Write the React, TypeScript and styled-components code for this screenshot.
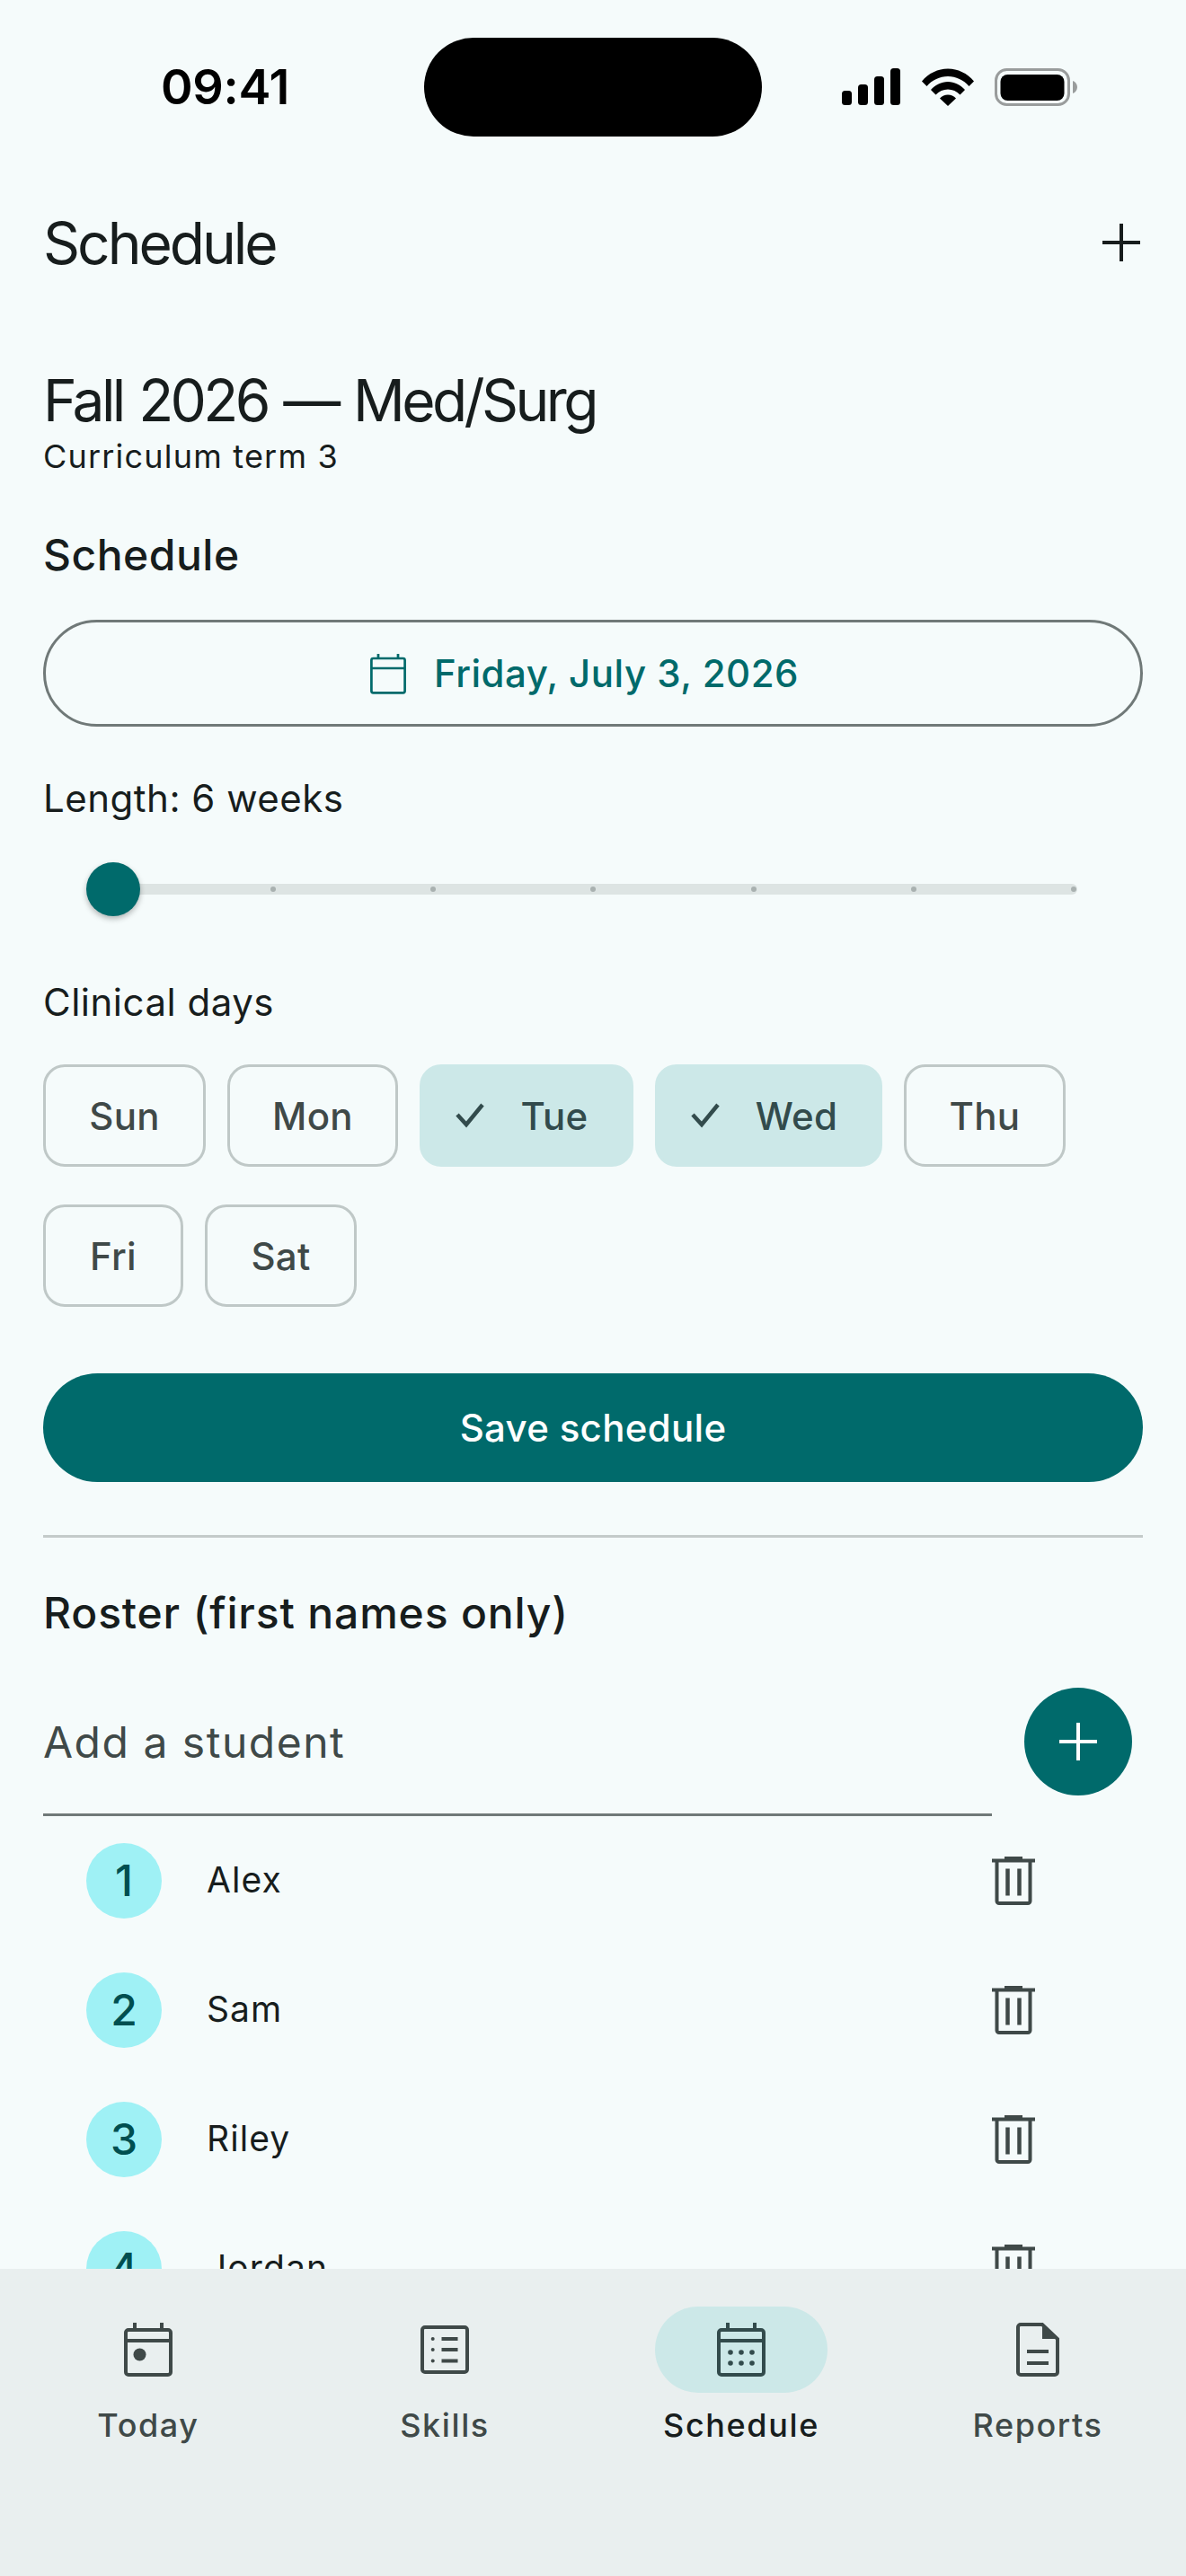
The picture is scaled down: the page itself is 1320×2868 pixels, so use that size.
import React from 'react';
import styled, { createGlobalStyle } from 'styled-components';

const GlobalStyle = createGlobalStyle`
  html, body {
    margin: 0;
    padding: 0;
    background: #f5fbfb;
  }
  * {
    box-sizing: border-box;
  }
`;

const DAYS = [
  { name: 'Sun', width: 181, selected: false },
  { name: 'Mon', width: 190, selected: false },
  { name: 'Tue', width: 238, selected: true },
  { name: 'Wed', width: 253, selected: true },
  { name: 'Thu', width: 180, selected: false },
  { name: 'Fri', width: 156, selected: false },
  { name: 'Sat', width: 169, selected: false },
];

const STUDENTS = ['Alex', 'Sam', 'Riley', 'Jordan'];

const SignalIcon = () => (
  <svg width="66" height="42" viewBox="0 0 66 42" fill="#000">
    <rect x="0" y="25" width="11" height="16" rx="3.5" />
    <rect x="18" y="18" width="11" height="23" rx="3.5" />
    <rect x="36" y="9" width="11" height="32" rx="3.5" />
    <rect x="54" y="0" width="11" height="41" rx="3.5" />
  </svg>
);

const WifiIcon = () => (
  <svg width="58" height="42" viewBox="0 0 58 42" fill="#000">
    <path d="M0 14.5C7.5 5.500 18 0.500 29 0.500S50.500 5.500 58 14.500L52.500 20C46.500 13 38 9 29 9S11.500 13 5.500 20Z" />
    <path d="M10 24C15 18.500 21.800 15 29 15S43 18.500 48 24L42.500 29.500C39 25.500 34 23.500 29 23.500S19 25.500 15.500 29.500Z" />
    <path d="M20 33.500C22.500 31 25.500 29.500 29 29.500S35.500 31 38 33.500L29 42Z" />
  </svg>
);

const BatteryIcon = () => (
  <svg width="92" height="42" viewBox="0 0 92 42">
    <rect x="1.500" y="1.500" width="81" height="39" rx="12" fill="none" stroke="#999c9c" strokeWidth="3" />
    <rect x="6.500" y="7" width="71" height="29" rx="8" fill="#000" />
    <path d="M87 14C90 15 92 18 92 21S90 27 87 28Z" fill="#999c9c" />
  </svg>
);

const PlusIcon = ({ color }: { color: string }) => (
  <svg width="42" height="42" viewBox="0 0 42 42" fill={color}>
    <rect x="19" y="0" width="4" height="42" />
    <rect x="0" y="19" width="42" height="4" />
  </svg>
);

const DateIcon = () => (
  <svg width="42" height="46" viewBox="0 0 42 46" fill="none" stroke="#006a6b" strokeWidth="2.700">
    <rect x="2.400" y="6" width="37.200" height="38.300" rx="2" />
    <path d="M2.400 17H39.600M10 1V6M32 1V6" />
  </svg>
);

const CheckIcon = () => (
  <svg width="36" height="28" viewBox="0 0 36 28" fill="none" stroke="#324b4c" strokeWidth="4.500">
    <path d="M2 13L12 24L30 2" />
  </svg>
);

const TrashIcon = () => (
  <svg width="48" height="54" viewBox="0 0 48 54" fill="none" stroke="#3f4948" strokeWidth="4">
    <path d="M0 4.500H48" />
    <path d="M14 1.500H34" strokeWidth="3" />
    <path d="M5.500 4.500V49.500A2.500 2.500 0 0 0 8 52H40A2.500 2.500 0 0 0 42.500 49.500V4.500" />
    <path d="M17.500 13.500V43.500M30.500 13.500V43.500" strokeWidth="4.500" />
  </svg>
);

const CalendarFrame = () => (
  <>
    <rect x="11" y="14" width="50" height="50" rx="3" />
    <path d="M11 26H61M21 6V14M51 6V14" />
  </>
);

const TodayIcon = () => (
  <svg width="72" height="72" viewBox="0 0 72 72" fill="none" stroke="#3f4948" strokeWidth="4">
    <CalendarFrame />
    <circle cx="26.500" cy="41.500" r="7" fill="#3f4948" stroke="none" />
  </svg>
);

const SkillsIcon = () => (
  <svg width="72" height="72" viewBox="0 0 72 72" fill="none" stroke="#3f4948" strokeWidth="4">
    <rect x="11" y="11" width="50" height="50" rx="3" />
    <path d="M32.500 24H50.500M32.500 36H50.500M32.500 48.500H50.500" />
    <g fill="#3f4948" stroke="none">
      <circle cx="22.700" cy="24" r="2" />
      <circle cx="22.700" cy="36" r="2" />
      <circle cx="22.700" cy="48.500" r="2" />
    </g>
  </svg>
);

const ScheduleIcon = () => (
  <svg width="72" height="72" viewBox="0 0 72 72" fill="none" stroke="#324b4c" strokeWidth="4">
    <CalendarFrame />
    <g fill="#324b4c" stroke="none">
      {[24, 36, 48].map((x) =>
        [39, 51].map((y) => <circle key={`${x}-${y}`} cx={x} cy={y} r="2.800" />),
      )}
    </g>
  </svg>
);

const ReportsIcon = () => (
  <svg width="72" height="72" viewBox="0 0 72 72" fill="none" stroke="#3f4948" strokeWidth="4">
    <path d="M17 8H41L58 24V61A3 3 0 0 1 55 64H17A3 3 0 0 1 14 61V11A3 3 0 0 1 17 8Z" />
    <path d="M41 7L59 24H41Z" fill="#3f4948" stroke="none" />
    <path d="M24 38H48M24 51H48" />
  </svg>
);

const NAV_ITEMS = [
  { label: 'Today', icon: <TodayIcon />, active: false },
  { label: 'Skills', icon: <SkillsIcon />, active: false },
  { label: 'Schedule', icon: <ScheduleIcon />, active: true },
  { label: 'Reports', icon: <ReportsIcon />, active: false },
];

const App = () => {
  return (
    <Screen>
      <GlobalStyle />
      <StatusBar>
        <Clock>09:41</Clock>
        <Island />
        <StatusIcons>
          <SignalIcon />
          <WifiIcon />
          <BatteryIcon />
        </StatusIcons>
      </StatusBar>

      <AppBar>
        <AppBarTitle>Schedule</AppBarTitle>
        <PlusIcon color="#171d1d" />
      </AppBar>

      <Content>
        <TermTitle>Fall 2026 — Med/Surg</TermTitle>
        <TermSubtitle>Curriculum term 3</TermSubtitle>

        <SectionTitle>Schedule</SectionTitle>
        <DateButton>
          <DateIcon />
          <span>Friday, July 3, 2026</span>
        </DateButton>

        <LengthLabel>Length: 6 weeks</LengthLabel>
        <Slider>
          <SliderTrack>
            {Array.from({ length: 7 }).map((_, i) => (
              <SliderTick key={i} />
            ))}
          </SliderTrack>
          <SliderThumb />
        </Slider>

        <DaysLabel>Clinical days</DaysLabel>
        <Chips>
          {DAYS.map((day) => (
            <Chip key={day.name} $selected={day.selected} $width={day.width}>
              {day.selected && <CheckIcon />}
              {day.name}
            </Chip>
          ))}
        </Chips>

        <SaveButton>Save schedule</SaveButton>
        <Divider />

        <RosterTitle>Roster (first names only)</RosterTitle>
        <AddRow>
          <AddField>Add a student</AddField>
          <AddFab>
            <PlusIcon color="#ffffff" />
          </AddFab>
        </AddRow>

        <RosterList>
          {STUDENTS.map((name, i) => (
            <RosterRow key={name}>
              <Avatar>{i + 1}</Avatar>
              <StudentName>{name}</StudentName>
              <TrashIcon />
            </RosterRow>
          ))}
        </RosterList>
      </Content>

      <BottomNav>
        {NAV_ITEMS.map((item) => (
          <NavItem key={item.label}>
            <NavPill $active={item.active}>{item.icon}</NavPill>
            <NavLabel $active={item.active}>{item.label}</NavLabel>
          </NavItem>
        ))}
      </BottomNav>
    </Screen>
  );
};

const Screen = styled.div`
  width: 1320px;
  height: 2868px;
  display: flex;
  flex-direction: column;
  overflow: hidden;
  background: #f5fbfb;
  color: #171d1d;
  font-family: Inter, 'Noto Sans', sans-serif;
`;

const StatusBar = styled.div`
  flex: none;
  height: 210px;
  padding: 42px 0 0 179px;
  display: flex;
  align-items: flex-start;
`;

const Clock = styled.div`
  width: 143px;
  height: 110px;
  line-height: 110px;
  font-size: 54px;
  font-weight: 600;
  letter-spacing: -0.3px;
  color: #000;
  white-space: nowrap;
`;

const Island = styled.div`
  width: 376px;
  height: 110px;
  margin-left: 150px;
  border-radius: 55px;
  background: #000;
`;

const StatusIcons = styled.div`
  height: 42px;
  margin: 34px 0 0 89px;
  display: flex;
  gap: 23px;
`;

const AppBar = styled.div`
  flex: none;
  height: 120px;
  padding: 0 51px 0 48px;
  display: flex;
  align-items: center;
  justify-content: space-between;
`;

const AppBarTitle = styled.h1`
  margin: 0;
  font-size: 64px;
  font-weight: 400;
  letter-spacing: -3px;
`;

const Content = styled.main`
  flex: 1;
  min-height: 0;
  overflow: hidden;
  padding: 78px 48px 0;
`;

const TermTitle = styled.h2`
  margin: 0;
  font-size: 64px;
  line-height: 76px;
  font-weight: 400;
  letter-spacing: -3.6px;
  word-spacing: 3px;
`;

const TermSubtitle = styled.div`
  font-size: 36px;
  line-height: 48px;
  letter-spacing: 1.2px;
`;

const SectionTitle = styled.h3`
  margin: 56px 0 0;
  font-size: 48px;
  line-height: 60px;
  font-weight: 450;
  letter-spacing: 0.5px;
`;

const DateButton = styled.div`
  height: 119px;
  margin-top: 42px;
  padding-right: 20px;
  border: 3px solid #707978;
  border-radius: 60px;
  display: flex;
  align-items: center;
  justify-content: center;
  gap: 30px;
  color: #006a6b;
  font-size: 42px;
  font-weight: 450;
  letter-spacing: 0.5px;
`;

const LengthLabel = styled.div`
  margin-top: 53px;
  font-size: 42px;
  line-height: 54px;
  letter-spacing: 0.5px;
`;

const Slider = styled.div`
  position: relative;
  width: 1104px;
  height: 60px;
  margin: 44px 0 0 48px;
  display: flex;
  align-items: center;
`;

const SliderTrack = styled.div`
  width: 1076px;
  height: 12px;
  margin-left: 27px;
  padding-right: 1px;
  border-radius: 6px;
  background: #dde4e3;
  display: flex;
  align-items: center;
  justify-content: space-between;
`;

const SliderTick = styled.div`
  width: 6px;
  height: 6px;
  border-radius: 50%;
  background: #a9b1b0;
`;

const SliderThumb = styled.div`
  position: absolute;
  left: 0;
  top: 0;
  width: 60px;
  height: 60px;
  border-radius: 50%;
  background: #006a6b;
  box-shadow: 0 3px 6px rgba(0, 0, 0, 0.28);
`;

const DaysLabel = styled(LengthLabel)`
  margin-top: 69px;
`;

const Chips = styled.div`
  margin-top: 42px;
  display: flex;
  flex-wrap: wrap;
  column-gap: 24px;
  row-gap: 42px;
`;

const Chip = styled.div<{ $selected: boolean; $width: number }>`
  width: ${(p) => p.$width}px;
  height: 114px;
  padding-right: ${(p) => (p.$selected ? 10 : 0)}px;
  border-radius: 24px;
  border: 3px solid ${(p) => (p.$selected ? '#cce8e8' : '#bfc8c7')};
  background: ${(p) => (p.$selected ? '#cce8e8' : 'transparent')};
  color: ${(p) => (p.$selected ? '#324b4c' : '#3f4948')};
  display: flex;
  align-items: center;
  justify-content: center;
  gap: 36px;
  font-size: 42px;
  font-weight: 450;
  letter-spacing: 0.3px;
`;

const SaveButton = styled.div`
  height: 121px;
  margin-top: 74px;
  border-radius: 61px;
  background: #006a6b;
  color: #fff;
  display: flex;
  align-items: center;
  justify-content: center;
  font-size: 42px;
  font-weight: 450;
  letter-spacing: 0.3px;
`;

const Divider = styled.div`
  height: 3px;
  margin-top: 59px;
  background: #c4cbca;
`;

const RosterTitle = styled(SectionTitle)`
  margin-top: 54px;
  letter-spacing: 0.85px;
`;

const AddRow = styled.div`
  margin-top: 53px;
  display: flex;
  align-items: flex-start;
  gap: 36px;
`;

const AddField = styled.div`
  width: 1056px;
  height: 143px;
  padding-top: 31px;
  border-bottom: 3px solid #707978;
  color: #3f4948;
  font-size: 48px;
  line-height: 60px;
  letter-spacing: 1.5px;
`;

const AddFab = styled.div`
  width: 120px;
  height: 120px;
  border-radius: 50%;
  background: #006a6b;
  display: flex;
  align-items: center;
  justify-content: center;
`;

const RosterList = styled.div`
  display: flex;
  flex-direction: column;
`;

const RosterRow = styled.div`
  flex: none;
  height: 144px;
  padding: 0 120px 0 48px;
  display: flex;
  align-items: center;
`;

const Avatar = styled.div`
  width: 84px;
  height: 84px;
  padding-bottom: 2px;
  border-radius: 50%;
  background: #9ff1f5;
  color: #004f50;
  display: flex;
  align-items: center;
  justify-content: center;
  font-size: 48px;
  font-weight: 450;
`;

const StudentName = styled.div`
  flex: 1;
  margin: 0 0 4px 50px;
  font-size: 39px;
  letter-spacing: 1.1px;
`;

const BottomNav = styled.nav`
  flex: none;
  height: 342px;
  padding-top: 42px;
  background: #e9efef;
  display: grid;
  grid-template-columns: repeat(4, 1fr);
  align-content: start;
`;

const NavItem = styled.div`
  display: flex;
  flex-direction: column;
  align-items: center;
`;

const NavPill = styled.div<{ $active: boolean }>`
  width: 192px;
  height: 96px;
  border-radius: 48px;
  background: ${(p) => (p.$active ? '#cce8e8' : 'transparent')};
  display: flex;
  align-items: center;
  justify-content: center;
`;

const NavLabel = styled.div<{ $active: boolean }>`
  margin-top: 12px;
  font-size: 36px;
  line-height: 48px;
  font-weight: 450;
  letter-spacing: 1.6px;
  color: ${(p) => (p.$active ? '#171d1d' : '#3f4948')};
`;

export default App;
